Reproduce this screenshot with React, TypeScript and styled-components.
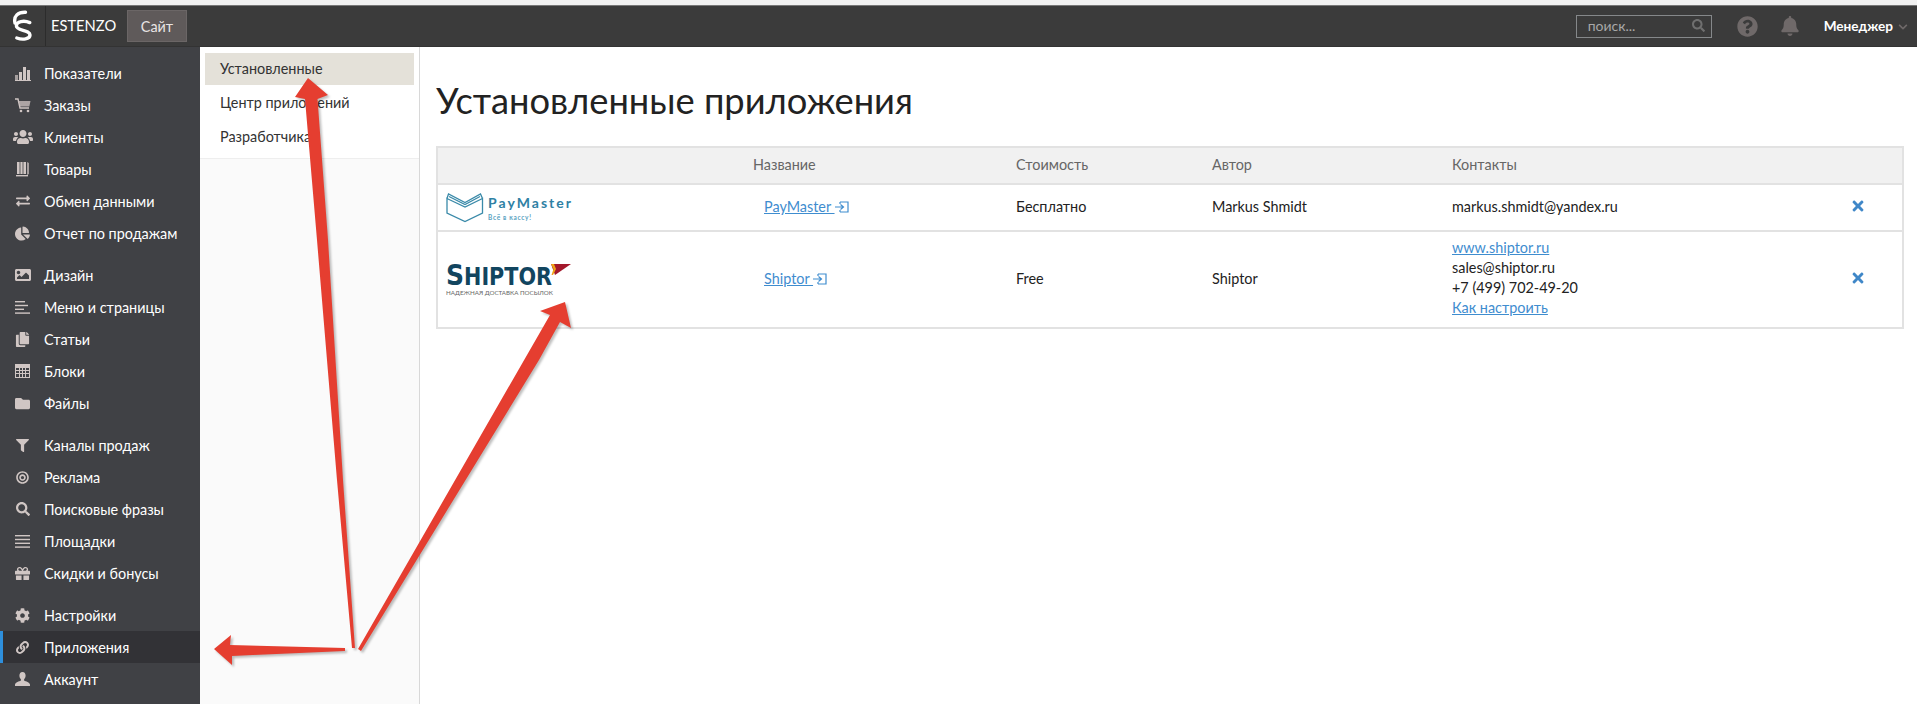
import React from "react";
import styled, { createGlobalStyle } from "styled-components";
import {
  FaUsers, FaExchangeAlt, FaChartPie, FaImage, FaCopy, FaFolder,
  FaFilter, FaBullseye, FaSearch, FaGift, FaCog, FaLink, FaQuestionCircle, FaBell, FaChevronDown, FaTimes,
} from "react-icons/fa";

const Global = createGlobalStyle`
  html, body { margin: 0; padding: 0; height: 704px; overflow: hidden; background: #fff; }
  body { font-family: Lato, "Noto Sans", sans-serif; font-size: 14.4px; color: #222; }
  * { box-sizing: border-box; }
`;

const Page = styled.div`
  position: relative;
  width: 1917px;
  height: 704px;
  display: flex;
  flex-direction: column;
  overflow: hidden;
`;
const TopStrip = styled.div`
  height: 5px;
  flex: none;
  background: #f1f1f1;
`;
const Header = styled.header`
  height: 42px;
  flex: none;
  display: flex;
  align-items: center;
  background: #3b3b3b;
  border-top: 1px solid #777;
  border-bottom: 1px solid #333;
`;
const LogoCell = styled.div`
  width: 46px;
  height: 100%;
  flex: none;
  display: flex;
  align-items: center;
  justify-content: center;
  border-right: 1px solid #2c2c2c;
`;
const Brand = styled.span`
  margin-left: 5px;
  width: 76px;
  font-size: 14.7px;
  color: #fff;
  position: relative;
  top: -1px;
`;
const SiteButton = styled.div`
  width: 60px;
  height: 32px;
  display: flex;
  align-items: center;
  justify-content: center;
  background: #5f5a5a;
  border: 1px solid #6b6666;
  color: #e8e4e4;
  font-size: 14.4px;
`;
const HeaderRight = styled.div`
  margin-left: auto;
  display: flex;
  align-items: center;
  color: #6f6969;
`;
const Search = styled.div`
  width: 136px;
  height: 23px;
  padding: 0 6px 1px 11px;
  display: flex;
  align-items: center;
  justify-content: space-between;
  border: 1px solid #85888a;
  color: #a8a8a8;
  font-size: 14px;
`;
const SearchGlyph = styled(FaSearch)`
  font-size: 13px;
  color: #6f6f6f;
`;
const HelpIcon = styled(FaQuestionCircle)`
  margin-left: 25px;
  font-size: 21px;
`;
const BellIcon = styled(FaBell)`
  margin-left: 22px;
  font-size: 20px;
`;
const Manager = styled.span`
  margin-left: 24px;
  color: #fff;
  font-size: 13.6px;
  font-weight: 700;
`;
const Chevron = styled(FaChevronDown)`
  margin: 1px 9px 0 5px;
  font-size: 10px;
`;
const Body = styled.div`
  flex: 1;
  display: flex;
  min-height: 0;
`;
const Sidebar = styled.nav`
  width: 200px;
  flex: none;
  padding-top: 10px;
  background: #404145;
  display: flex;
  flex-direction: column;
  gap: 10px;
`;
const Group = styled.div`
  display: flex;
  flex-direction: column;
`;
const NavRow = styled.div<{ $active?: boolean }>`
  height: 32px;
  display: flex;
  align-items: center;
  color: #fff;
  font-size: 14.4px;
  background: ${(p) => (p.$active ? "#323236" : "transparent")};
  border-left: 3px solid ${(p) => (p.$active ? "#2e8fdc" : "transparent")};
`;
const NavIcon = styled.span`
  width: 41px;
  padding-right: 2px;
  flex: none;
  display: flex;
  justify-content: center;
  color: #d0c6c4;
  font-size: 15px;
  line-height: 0;
`;
const SubColumn = styled.aside`
  width: 220px;
  flex: none;
  background: #fafafa;
  border-right: 1px solid #d8d8d8;
`;
const SubMenu = styled.div`
  height: 112px;
  padding: 6px 5px 0;
  background: #fff;
  border-bottom: 1px solid #eee;
`;
const SubItem = styled.div<{ $active?: boolean }>`
  height: 32px;
  margin-bottom: 2px;
  padding: 0 0 1px 15px;
  display: flex;
  align-items: center;
  font-size: 14.4px;
  color: #333;
  background: ${(p) => (p.$active ? "#e4e1d9" : "transparent")};
`;
const Main = styled.main`
  flex: 1;
  padding: 0 13px 0 16px;
  min-width: 0;
`;
const Title = styled.h1`
  margin: 33px 0 25px;
  height: 41px;
  font-size: 36.3px;
  line-height: 41px;
  font-weight: 400;
  color: #222;
`;
const Table = styled.table`
  width: 100%;
  table-layout: fixed;
  border-collapse: collapse;
  border: 2px solid #e2e2e2;
  font-size: 14.4px;
`;
const HeadRow = styled.tr`
  height: 37px;
  background: #f1f1f1;
`;
const HeadCell = styled.th`
  padding: 0 0 3px;
  text-align: left;
  font-weight: 400;
  color: #666;
`;
const Row = styled.tr<{ $h: number }>`
  height: ${(p) => p.$h}px;
  border-top: 2px solid #e2e2e2;
`;
const Cell = styled.td`
  padding: 0 0 3px;
  color: #222;
`;
const LogoTd = styled.td`
  padding: 0 0 0 8px;
  line-height: 0;
`;
const NameCell = styled.td`
  padding: 0 0 3px 11px;
`;
const Link = styled.a`
  color: #3f8dcf;
  text-decoration: underline;
`;
const Enter = styled.svg`
  vertical-align: -1px;
`;
const ContactLine = styled.div`
  line-height: 20px;
`;
const RemoveCell = styled.td`
  padding: 0 0 4px 8px;
  color: #3f87c8;
  font-size: 16px;
  line-height: 0;
`;
const Arrows = styled.svg`
  position: absolute;
  left: 0;
  top: 0;
  pointer-events: none;
  filter: drop-shadow(2px 2px 1px rgba(0, 0, 0, 0.25));
`;

const stroke = { fill: "none", stroke: "currentColor", strokeWidth: 1.4 };

const ChartIcon = () => (
  <svg width="16" height="15" viewBox="0 0 16 15" fill="currentColor">
    <rect x="0" y="9" width="3" height="5" opacity=".7" />
    <rect x="4" y="6" width="3" height="8" />
    <rect x="8" y="1" width="3" height="13" />
    <rect x="12" y="4" width="3" height="10" />
    <rect x="0" y="14" width="16" height="1" />
  </svg>
);
const CartIcon = () => (
  <svg width="16" height="15" viewBox="0 0 16 15" fill="currentColor">
    <path d="M0 1h3l2 9h9" {...stroke} />
    <path d="M3.8 3H15.5l-1.2 5.5H5z" opacity=".75" />
    <circle cx="6" cy="13" r="1.3" />
    <circle cx="13" cy="13" r="1.3" />
  </svg>
);
const BooksIcon = () => (
  <svg width="16" height="16" viewBox="0 0 16 16" fill="currentColor">
    <path d="M2 1h9v12H2z" />
    <path d="M12 1l2 1v11l-2 1z" opacity=".7" />
    <path d="M1 14h12v1.4H1z" />
    <path d="M5 1v12M8 1v12" stroke="#404145" strokeWidth=".8" />
  </svg>
);
const LinesIcon = () => (
  <svg width="15" height="13" viewBox="0 0 15 13" fill="currentColor">
    <rect y="0" width="15" height="1.4" />
    <rect y="3.8" width="15" height="1.4" />
    <rect y="7.6" width="15" height="1.4" />
    <rect y="11.4" width="15" height="1.4" />
  </svg>
);
const MenuLinesIcon = () => (
  <svg width="15" height="13" viewBox="0 0 15 13" fill="currentColor">
    <rect y="0" width="10" height="1.4" />
    <rect y="3.8" width="13" height="1.4" />
    <rect y="7.6" width="9" height="1.4" />
    <rect y="11.4" width="15" height="1.4" />
  </svg>
);
const GridIcon = () => (
  <svg width="15" height="14" viewBox="0 0 15 14" fill="none" stroke="currentColor" strokeWidth="1">
    <rect x=".5" y=".5" width="14" height="13" />
    <path d="M.5 3.5h14M.5 6.5h14M.5 9.5h14M4.5 .5v13M7.5 .5v13M10.5 .5v13" />
    <rect x=".5" y=".5" width="14" height="2.5" fill="currentColor" />
  </svg>
);
const PersonIcon = () => (
  <svg width="15" height="14" viewBox="0 0 15 14" fill="currentColor">
    <path d="M7.5 0C5.4 0 4.4 1.6 4.4 3.6c0 1.6.7 3 1.5 3.7v1.3C4 9.8.6 10 0 12.6V14h15v-1.4c-.6-2.6-4-2.8-5.9-4V7.3c.8-.7 1.5-2.1 1.5-3.7C10.6 1.6 9.6 0 7.5 0z" />
  </svg>
);

type Item = { label: string; icon: React.ReactNode; active?: boolean };
const groups: Item[][] = [
  [
    { label: "Показатели", icon: <ChartIcon /> },
    { label: "Заказы", icon: <CartIcon /> },
    { label: "Клиенты", icon: <FaUsers size={20} /> },
    { label: "Товары", icon: <BooksIcon /> },
    { label: "Обмен данными", icon: <FaExchangeAlt size={14} /> },
    { label: "Отчет по продажам", icon: <FaChartPie size={15} /> },
  ],
  [
    { label: "Дизайн", icon: <FaImage size={16} /> },
    { label: "Меню и страницы", icon: <MenuLinesIcon /> },
    { label: "Статьи", icon: <FaCopy size={15} /> },
    { label: "Блоки", icon: <GridIcon /> },
    { label: "Файлы", icon: <FaFolder size={15} /> },
  ],
  [
    { label: "Каналы продаж", icon: <FaFilter size={13} /> },
    { label: "Реклама", icon: <FaBullseye size={13} /> },
    { label: "Поисковые фразы", icon: <FaSearch size={14} /> },
    { label: "Площадки", icon: <LinesIcon /> },
    { label: "Скидки и бонусы", icon: <FaGift size={15} /> },
  ],
  [
    { label: "Настройки", icon: <FaCog size={15} /> },
    { label: "Приложения", icon: <FaLink size={13} />, active: true },
    { label: "Аккаунт", icon: <PersonIcon /> },
  ],
];

const EnterIcon = () => (
  <Enter width="14" height="12" viewBox="0 0 14 12" fill="none" stroke="#3f8dcf" strokeWidth="1.2">
    <path d="M5 1h8v10H5M5 1v2M5 9v2" />
    <path d="M0 6h8M5.5 3.5L8.5 6l-3 2.5" />
  </Enter>
);

const PayMasterLogo = () => (
  <svg width="126" height="30" viewBox="0 0 126 30">
    <g fill="none" stroke="#3a8aa9" strokeWidth="1.3">
      <path d="M1 5.5L19 14 36.5 5.5V20L19 28.5 1 20z" />
      <path d="M1 5.5L2.5 1 19 9.5 34.5 1 36.5 5.5" />
      <path d="M3 3.5L19 11.5 34 3.5" />
    </g>
    <text x="42" y="15" fontFamily="Lato, sans-serif" fontSize="14" fontWeight="700" textLength="83" fill="#2f81a4">PayMaster</text>
    <text x="42" y="27" fontFamily="Lato, sans-serif" fontSize="6.5" fontWeight="700" textLength="43" fill="#5aa2bf">Всё в кассу!</text>
  </svg>
);
const ShiptorLogo = () => (
  <svg width="126" height="46" viewBox="0 -6 126 46">
    <text x="0" y="22" fontFamily="'DejaVu Sans', sans-serif" fontWeight="700" fontSize="24" textLength="106" lengthAdjust="spacingAndGlyphs" fill="#12455f">
      <tspan fontSize="29">S</tspan>HIPTOR
    </text>
    <path d="M105 1h20L109 12z" fill="#a3182b" />
    <path d="M105 1h3l2 5-3 6h-1.5l2-6z" fill="#f0a416" />
    <text x="0" y="32" fontFamily="Lato, sans-serif" fontSize="6.4" textLength="107" lengthAdjust="spacingAndGlyphs" fill="#666">НАДЕЖНАЯ ДОСТАВКА ПОСЫЛОК</text>
  </svg>
);

export default function App() {
  return (
    <Page>
      <Global />
      <TopStrip />
      <Header>
        <LogoCell>
          <svg width="22" height="32" viewBox="0 0 22 32" fill="none" stroke="#fff" strokeWidth="3.4" strokeLinecap="round">
            <path d="M3 13C1.4 6 6 2 13.5 2.2" />
            <path d="M17.8 12.6C12 10 4.4 11.3 4.4 16c0 5 13.6 3.6 13.6 9 0 4.3-7.6 5-13.2 3" />
          </svg>
        </LogoCell>
        <Brand>ESTENZO</Brand>
        <SiteButton>Сайт</SiteButton>
        <HeaderRight>
          <Search>
            поиск...
            <SearchGlyph />
          </Search>
          <HelpIcon />
          <BellIcon />
          <Manager>Менеджер</Manager>
          <Chevron />
        </HeaderRight>
      </Header>
      <Body>
        <Sidebar>
          {groups.map((g, i) => (
            <Group key={i}>
              {g.map((it) => (
                <NavRow key={it.label} $active={it.active}>
                  <NavIcon>{it.icon}</NavIcon>
                  {it.label}
                </NavRow>
              ))}
            </Group>
          ))}
        </Sidebar>
        <SubColumn>
          <SubMenu>
            <SubItem $active>Установленные</SubItem>
            <SubItem>Центр приложений</SubItem>
            <SubItem>Разработчика</SubItem>
          </SubMenu>
        </SubColumn>
        <Main>
          <Title>Установленные приложения</Title>
          <Table>
            <colgroup>
              <col style={{ width: 316 }} />
              <col style={{ width: 263 }} />
              <col style={{ width: 196 }} />
              <col style={{ width: 240 }} />
              <col style={{ width: 390 }} />
              <col />
            </colgroup>
            <thead>
              <HeadRow>
                <HeadCell />
                <HeadCell>Название</HeadCell>
                <HeadCell>Стоимость</HeadCell>
                <HeadCell>Автор</HeadCell>
                <HeadCell>Контакты</HeadCell>
                <HeadCell />
              </HeadRow>
            </thead>
            <tbody>
              <Row $h={47}>
                <LogoTd><PayMasterLogo /></LogoTd>
                <NameCell><Link>PayMaster </Link><EnterIcon /></NameCell>
                <Cell>Бесплатно</Cell>
                <Cell>Markus Shmidt</Cell>
                <Cell>markus.shmidt@yandex.ru</Cell>
                <RemoveCell><FaTimes /></RemoveCell>
              </Row>
              <Row $h={97}>
                <LogoTd><ShiptorLogo /></LogoTd>
                <NameCell><Link>Shiptor </Link><EnterIcon /></NameCell>
                <Cell>Free</Cell>
                <Cell>Shiptor</Cell>
                <Cell>
                  <ContactLine><Link>www.shiptor.ru </Link></ContactLine>
                  <ContactLine>sales@shiptor.ru</ContactLine>
                  <ContactLine>+7 (499) 702-49-20</ContactLine>
                  <ContactLine><Link>Как настроить</Link></ContactLine>
                </Cell>
                <RemoveCell><FaTimes /></RemoveCell>
              </Row>
            </tbody>
          </Table>
        </Main>
      </Body>
      <Arrows width="1917" height="704" viewBox="0 0 1917 704" fill="#e53e30">
        <path d="M308 78L328 95 317.5 99 328 240 343 480 355 648 352 648 337 480 317 240 305 99 295 97z" />
        <path d="M565 302L540 311 550 315 358 649 361 651 539 360 560 322 571 328z" />
        <path d="M214 649L231 635 230 645 345 648 345 651 232 656 232 665z" />
      </Arrows>
    </Page>
  );
}
